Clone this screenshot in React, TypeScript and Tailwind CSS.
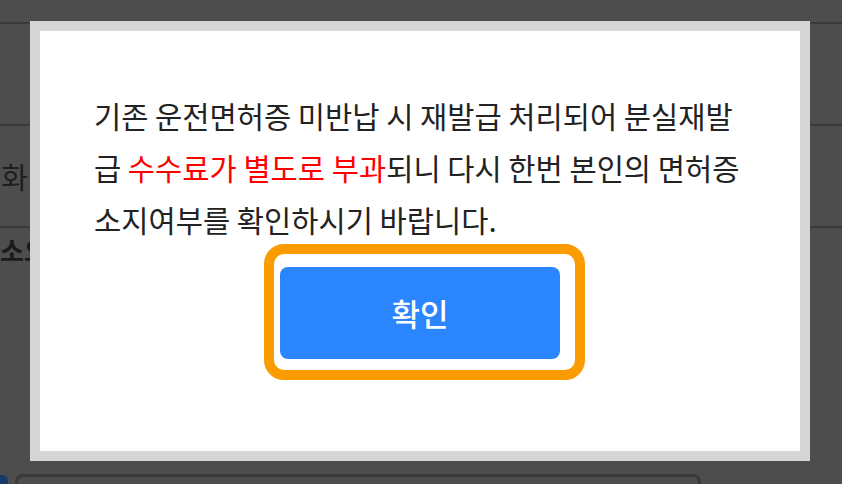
const font = { fontFamily: '"Noto Sans CJK KR", "Noto Sans", sans-serif' };

function BackgroundPage() {
  return (
    <div className="flex flex-col w-full h-full" style={font}>
      <div className="h-[22px]" />
      <div className="h-[102px] border-t-2 border-[#3a3a3a]" />
      <div className="h-[102px] border-t-2 border-[#3a3a3a] flex items-center">
        <div className="w-[28px] overflow-hidden flex justify-end">
          <span className="whitespace-nowrap text-[29px] text-[#1e1e1e] mt-[2px]">전화</span>
        </div>
      </div>
      <div className="border-t-2 border-[#3a3a3a] pt-[7px]">
        <span className="whitespace-nowrap text-[26px] font-bold text-[#1a1a1a] leading-[30px]">소요시간</span>
      </div>
      <div className="flex-1" />
      <div className="flex items-start h-[10px]">
        <div className="w-[12px] h-[12px] rounded-full bg-[#173a6e] -ml-[4px] mt-[1px]" />
        <div className="ml-[7px] w-[686px] h-[20px] rounded-[8px] border-[3px] border-[#3a3a3a] bg-[#4d4d4d]" />
      </div>
    </div>
  );
}

function NoticeModal() {
  return (
    <div
      className="absolute left-[30px] top-[21px] w-[780px] h-[440px] border-[10px] border-[#d6d6d6] bg-white flex flex-col"
      style={font}
    >
      <p className="pl-[54px] pt-[59px] text-[29.6px] leading-[52px] text-[#222222]">
        <span className="block whitespace-nowrap">기존 운전면허증 미반납 시 재발급 처리되어 분실재발</span>
        <span className="block whitespace-nowrap">
          급 <span className="text-[#ff0000]">수수료가 별도로 부과</span>되니 다시 한번 본인의 면허증
        </span>
        <span className="block whitespace-nowrap">소지여부를 확인하시기 바랍니다.</span>
      </p>
      <div className="ml-[224px] -mt-[2px] self-start border-[10px] border-[#fa9b00] rounded-[20px] bg-white pt-[13px] pr-[15px] pb-[11px] pl-[6px]">
        <button
          type="button"
          className="w-[280px] h-[92px] rounded-[8px] bg-[#2b85fe] text-white text-[31px] font-medium flex items-center justify-center"
        >
          확인
        </button>
      </div>
    </div>
  );
}

export default function App() {
  return (
    <div className="relative w-[842px] h-[484px] overflow-hidden bg-[#4d4d4d]">
      <BackgroundPage />
      <NoticeModal />
    </div>
  );
}
